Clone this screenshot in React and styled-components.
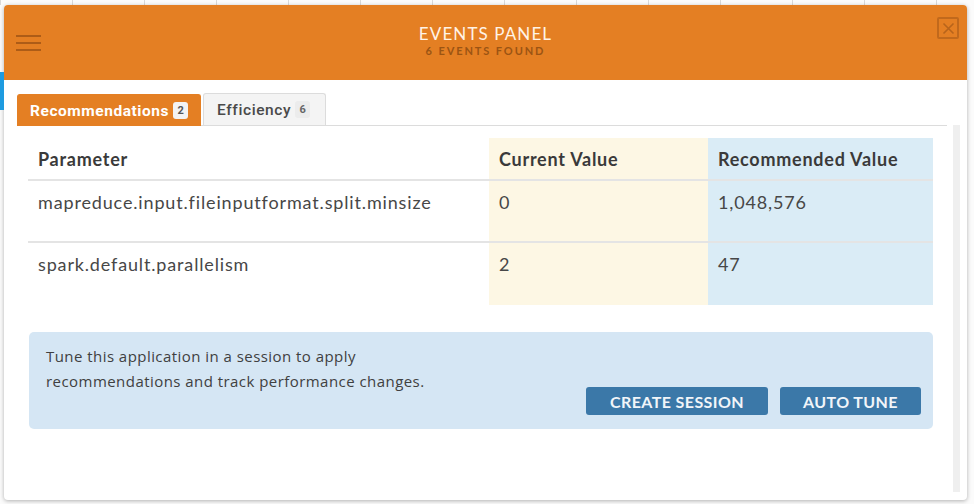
import React from "react"
import styled, { createGlobalStyle } from "styled-components"

const GlobalStyle = createGlobalStyle`
  html, body {
    margin: 0;
    padding: 0;
    height: 100%;
  }
  body {
    background: #f7f7f7;
    font-family: Lato, "Open Sans", sans-serif;
    color: #333;
  }
`

const Page = styled.div`
  width: 974px;
  height: 504px;
  box-sizing: border-box;
  padding: 5px 7px 4px 4px;
  background:
    linear-gradient(to right, #d9d9d9 1px, transparent 1px) 0 0 / 72px 5px repeat-x,
    #fbfbfb;
  position: relative;
  overflow: hidden;
`

const Panel = styled.div`
  height: 100%;
  background: #fff;
  border-radius: 4px;
  box-shadow: 0 1px 4px rgba(0, 0, 0, 0.3);
  display: flex;
  flex-direction: column;
  overflow: hidden;
`

const Header = styled.header`
  height: 75px;
  flex: none;
  background: #e47f23;
  display: grid;
  grid-template-columns: 60px 1fr 60px;
  align-items: center;
`

const MenuButton = styled.button`
  border: 0;
  background: none;
  padding: 0 0 0 12px;
  width: 40px;
  display: flex;
  flex-direction: column;
  gap: 5px;
  cursor: pointer;

  span {
    display: block;
    height: 2px;
    width: 25px;
    background: #ad5c17;
  }
`

const TitleBlock = styled.div`
  text-align: center;
  padding-bottom: 4px;
`

const Title = styled.div`
  font-size: 17px;
  letter-spacing: 1.1px;
  color: #fff3e6;
  line-height: 20px;
`

const Subtitle = styled.div`
  font-size: 11px;
  font-weight: 700;
  letter-spacing: 1.9px;
  color: #9b5413;
  line-height: 14px;
`

const CloseButton = styled.button`
  justify-self: end;
  align-self: start;
  margin: 12px 8px 0 0;
  width: 22px;
  height: 22px;
  box-sizing: border-box;
  border: 2px solid #c1691c;
  border-radius: 2px;
  background: transparent;
  padding: 0;
  display: flex;
  align-items: center;
  justify-content: center;
  cursor: pointer;
`

const Body = styled.div`
  flex: 1;
  display: flex;
  min-height: 0;
`

const Content = styled.div`
  flex: 1;
  padding: 13px 0 0 13px;
`

const Scrollbar = styled.div`
  width: 7px;
  margin: 45px 7px 8px 6px;
  background: #efefef;
`

const TabBar = styled.div`
  display: flex;
  align-items: flex-end;
  gap: 2px;
  border-bottom: 1px solid #dcdcdc;
  height: 32px;
`

const Tab = styled.button`
  height: 32px;
  box-sizing: border-box;
  padding: ${(p) => (p.$active ? "0 12px" : "0 15px 0 13px")};
  border: 1px solid ${(p) => (p.$active ? "#e47f23" : "#dcdcdc")};
  border-bottom: 0;
  border-radius: 3px 3px 0 0;
  background: ${(p) => (p.$active ? "#e47f23" : "#f4f4f4")};
  color: ${(p) => (p.$active ? "#fff" : "#4a4a4a")};
  font-family: Roboto, sans-serif;
  font-weight: ${(p) => (p.$active ? 700 : 500)};
  font-size: 15.5px;
  letter-spacing: ${(p) => (p.$active ? "0.55px" : "0.6px")};
  display: flex;
  align-items: center;
  gap: 4px;
  margin-bottom: ${(p) => (p.$active ? "-1px" : "0")};
  cursor: pointer;
`

const Badge = styled.span`
  min-width: 15px;
  height: 17px;
  padding: 0 2px;
  box-sizing: border-box;
  border-radius: 3px;
  font-size: 11px;
  font-weight: 700;
  letter-spacing: 0;
  line-height: 17px;
  text-align: center;
  background: ${(p) => (p.$active ? "#f3f3f3" : "#ececec")};
  color: ${(p) => (p.$active ? "#555" : "#666")};
`

const Table = styled.div`
  margin: 12px 0 0 11px;
  width: 905px;
  display: grid;
  grid-template-columns: 461px 219px 225px;
`

const Cell = styled.div`
  background: ${(p) => p.$bg || "transparent"};
  padding: 10px 10px 0;
  height: ${(p) => (p.$head ? "43px" : "62px")};
  box-sizing: border-box;
  border-bottom: ${(p) => (p.$last ? "0" : "2px solid #e4e4e4")};
  font-size: 18px;
  font-weight: ${(p) => (p.$head ? 700 : 400)};
  color: ${(p) => (p.$head ? "#3a3a3a" : "#474747")};
  letter-spacing: ${(p) => (p.$head ? "0.75px" : "0.85px")};
  line-height: 22px;
`

const InfoBox = styled.div`
  margin: 27px 0 0 12px;
  width: 904px;
  height: 97px;
  box-sizing: border-box;
  background: #d5e6f4;
  border-radius: 5px;
  padding: 12px 12px 14px 17px;
  display: flex;
  justify-content: space-between;
`

const InfoText = styled.p`
  margin: 0;
  font-family: "Open Sans", sans-serif;
  font-size: 15px;
  line-height: 25px;
  color: #404040;
  letter-spacing: 0.45px;
`

const Actions = styled.div`
  display: flex;
  align-items: flex-end;
  gap: 12px;
`

const ActionButton = styled.button`
  height: 28px;
  width: ${(p) => p.$w};
  border: 0;
  border-radius: 3px;
  background: #3b78a8;
  color: #f1f5f9;
  font-family: Lato, sans-serif;
  font-weight: 700;
  font-size: 16px;
  letter-spacing: 0.4px;
  cursor: pointer;
`

const BgStripe = styled.div`
  position: absolute;
  left: 0;
  top: 72px;
  width: 4px;
  height: 38px;
  background: #1e9be0;
`

const rows = [
  { name: "mapreduce.input.fileinputformat.split.minsize", current: "0", rec: "1,048,576" },
  { name: "spark.default.parallelism", current: "2", rec: "47" },
]

const CURRENT_BG = "#fdf7e4"
const REC_BG = "#daecf6"

export default function App() {
  return (
    <>
      <GlobalStyle />
      <Page>
        <BgStripe />
        <Panel>
          <Header>
            <MenuButton aria-label="menu">
              <span />
              <span />
              <span />
            </MenuButton>
            <TitleBlock>
              <Title>EVENTS PANEL</Title>
              <Subtitle>6 EVENTS FOUND</Subtitle>
            </TitleBlock>
            <CloseButton aria-label="close">
              <svg width="13" height="13" viewBox="0 0 13 13">
                <path d="M1.5 1.5 L11.5 11.5 M11.5 1.5 L1.5 11.5" stroke="#b8641b" strokeWidth="1.6" />
              </svg>
            </CloseButton>
          </Header>
          <Body>
            <Content>
              <TabBar>
                <Tab $active>
                  Recommendations <Badge $active>2</Badge>
                </Tab>
                <Tab>
                  Efficiency <Badge>6</Badge>
                </Tab>
              </TabBar>
              <Table>
                <Cell $head>Parameter</Cell>
                <Cell $head $bg={CURRENT_BG}>Current Value</Cell>
                <Cell $head $bg={REC_BG}>Recommended Value</Cell>
                {rows.map((r, i) => (
                  <React.Fragment key={r.name}>
                    <Cell $last={i === rows.length - 1}>{r.name}</Cell>
                    <Cell $last={i === rows.length - 1} $bg={CURRENT_BG}>{r.current}</Cell>
                    <Cell $last={i === rows.length - 1} $bg={REC_BG}>{r.rec}</Cell>
                  </React.Fragment>
                ))}
              </Table>
              <InfoBox>
                <InfoText>
                  Tune this application in a session to apply
                  <br />
                  recommendations and track performance changes.
                </InfoText>
                <Actions>
                  <ActionButton $w="182px">CREATE SESSION</ActionButton>
                  <ActionButton $w="141px">AUTO TUNE</ActionButton>
                </Actions>
              </InfoBox>
            </Content>
            <Scrollbar />
          </Body>
        </Panel>
      </Page>
    </>
  )
}
